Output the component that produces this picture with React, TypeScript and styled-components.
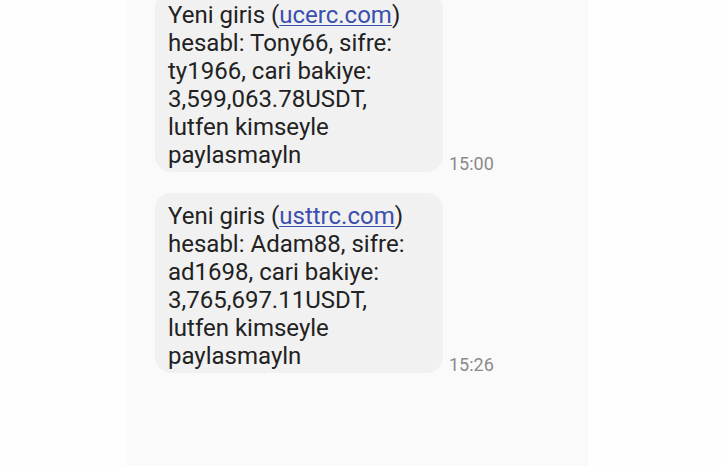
import styled, { createGlobalStyle } from "styled-components";

const GlobalStyle = createGlobalStyle`
  html, body {
    margin: 0;
    padding: 0;
    background: #fefefe;
    overflow: hidden;
  }
`;

type Message = {
  site: string;
  user: string;
  pass: string;
  balance: string;
  time: string;
};

const messages: Message[] = [
  { site: "ucerc.com", user: "Tony66", pass: "ty1966", balance: "3,599,063.78USDT", time: "15:00" },
  { site: "usttrc.com", user: "Adam88", pass: "ad1698", balance: "3,765,697.11USDT", time: "15:26" },
];

const App = () => {
  return (
    <>
      <GlobalStyle />
      <Screen>
        <Thread>
          {messages.map((m) => (
            <Row key={m.time}>
              <Bubble>
                Yeni giris (<Link>{m.site}</Link>)
                <br />
                hesabl: {m.user}, sifre:
                <br />
                {m.pass}, cari bakiye:
                <br />
                {m.balance},
                <br />
                lutfen kimseyle
                <br />
                paylasmayln
              </Bubble>
              <Time>{m.time}</Time>
            </Row>
          ))}
        </Thread>
      </Screen>
    </>
  );
};

export default App;

const Screen = styled.div`
  width: 462px;
  height: 466px;
  margin-left: 126px;
  background: #fafafa;
  overflow: hidden;
`;

const Thread = styled.div`
  display: flex;
  flex-direction: column;
  gap: 21px;
  padding-left: 29px;
  margin-top: -8px;
`;

const Row = styled.div`
  display: flex;
  align-items: flex-end;
  gap: 6px;
`;

const Bubble = styled.div`
  box-sizing: border-box;
  width: 288px;
  padding: 9px 13px 3px;
  background: #f1f1f1;
  border-radius: 16px;
  font-family: Roboto, "Liberation Sans", sans-serif;
  font-size: 24px;
  line-height: 28px;
  color: #222222;
`;

const Link = styled.span`
  color: #3b4fae;
  text-decoration: underline;
  text-underline-offset: 2px;
  text-decoration-thickness: 1px;
`;

const Time = styled.span`
  font-family: Roboto, "Liberation Sans", sans-serif;
  font-size: 18px;
  color: #8a8a8a;
  margin-bottom: -2px;
`;
